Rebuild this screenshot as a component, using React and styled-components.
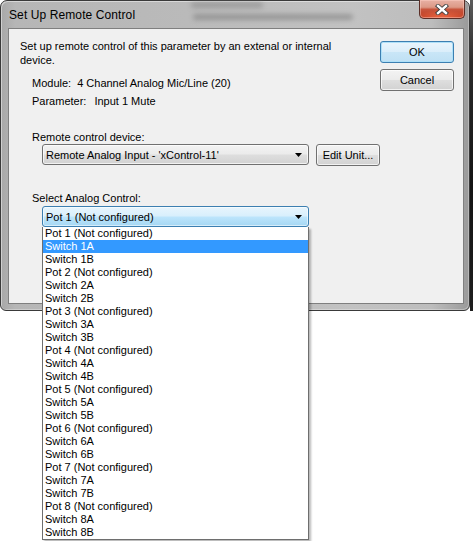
import React from 'react';
import styled, { createGlobalStyle, css } from 'styled-components';

const GlobalStyle = createGlobalStyle`
  html, body {
    margin: 0;
    padding: 0;
    background: #ffffff;
  }
  body {
    font-family: "Liberation Sans", Arial, sans-serif;
    font-size: 11px;
    color: #000;
  }
`;

const Scene = styled.div`
  position: relative;
  width: 473px;
  height: 541px;
  overflow: hidden;
  background: #ffffff;
`;

const Desk = styled.div`
  display: flex;
  height: 311px;
`;

const DesktopEdge = styled.div`
  flex: 1;
  background: linear-gradient(#5c5c5c, #2a2a2a 20%, #141414 60%, #1e1e1e);
`;

const Window = styled.div`
  position: relative;
  width: 470px;
  flex: none;
  box-sizing: border-box;
  display: flex;
  flex-direction: column;
  border: 1px solid #3a3a3a;
  border-radius: 7px 7px 6px 6px;
  background: linear-gradient(
    to right,
    #a8a8a8 0%,
    #b6b6b6 3%,
    #bababa 40%,
    #c2c2c2 75%,
    #bdbdbd 92%,
    #9a9a9a 100%
  );
  box-shadow: inset 1px 1px 0 rgba(255, 255, 255, 0.45), inset -1px -1px 0 rgba(255, 255, 255, 0.3);
`;

const TitleBar = styled.div`
  position: relative;
  height: 27px;
  display: flex;
  align-items: center;
  padding-left: 8px;
`;

const Haze = styled.span`
  position: absolute;
  left: ${(p) => p.$left}px;
  top: ${(p) => p.$top}px;
  width: ${(p) => p.$width}px;
  height: ${(p) => p.$height}px;
  background: #7e7e7e;
  opacity: ${(p) => p.$opacity};
  filter: blur(2.5px);
  border-radius: 3px;
`;

const Title = styled.span`
  position: relative;
  font-family: "Liberation Sans", Arial, sans-serif;
  font-size: 12px;
  color: #000;
  letter-spacing: 0.1px;
`;

const CloseButton = styled.div`
  position: relative;
  align-self: flex-start;
  margin: -1px 4px 0 auto;
  width: 46px;
  height: 19px;
  box-sizing: border-box;
  border: 1px solid #5b2e27;
  border-top: none;
  border-radius: 0 0 5px 5px;
  background:
    radial-gradient(ellipse 60% 45% at 50% 100%, rgba(255, 120, 80, 0.75), rgba(255, 120, 80, 0) 100%),
    linear-gradient(#e8b1a4 0%, #dc9986 40%, #c8553c 52%, #bd3a1f 100%);
  box-shadow: inset 0 0 0 1px rgba(255, 210, 200, 0.45);
  display: flex;
  align-items: center;
  justify-content: center;
`;

const Client = styled.div`
  flex: 1;
  margin: 0 5px 6px 7px;
  border: 1px solid #7f7f7f;
  background: #f0f0f0;
  display: flex;
  padding: 10px 0 0 11px;
`;

const Main = styled.div`
  flex: 1;
  display: flex;
  flex-direction: column;
`;

const Actions = styled.div`
  width: 74px;
  margin: 2px 11px 0 0;
  display: flex;
  flex-direction: column;
  gap: 6px;
`;

const Description = styled.p`
  margin: 0;
  line-height: 14px;
`;

const Info = styled.div`
  margin: 7px 0 0 12px;
  display: flex;
  flex-direction: column;
`;

const InfoRow = styled.div`
  height: 18px;
  display: flex;
  align-items: center;
`;

const InfoLabel = styled.span`
  margin-right: ${(p) => p.$gap}px;
`;

const FieldLabel = styled.div`
  margin: ${(p) => p.$top}px 0 0 12px;
  line-height: 14px;
`;

const ComboRow = styled.div`
  display: flex;
  align-items: flex-start;
  gap: 7px;
  margin-left: 22px;
`;

const gloss = css`
  border: 1px solid #707070;
  border-radius: 3px;
  background: linear-gradient(#f3f3f3 0%, #ebebeb 48%, #dedede 52%, #d2d2d2 100%);
  box-shadow: inset 0 0 0 1px rgba(255, 255, 255, 0.7);
`;

const focusGloss = css`
  border: 1px solid #3c7fb1;
  border-radius: 3px;
  background: linear-gradient(#e8f5fd 0%, #d8effc 48%, #bde5fc 52%, #a5d7f3 100%);
  box-shadow: inset 0 0 0 1px rgba(255, 255, 255, 0.55);
`;

const ComboShell = styled.div`
  position: relative;
  width: 267px;
  margin-top: ${(p) => p.$top || 0}px;
  margin-left: ${(p) => p.$left || 0}px;
`;

const Combo = styled.div`
  box-sizing: border-box;
  height: 21px;
  display: flex;
  align-items: center;
  padding: 0 6px 0 3px;
  ${(p) => (p.$focused ? focusGloss : gloss)}
`;

const ComboText = styled.span`
  flex: 1;
  white-space: nowrap;
`;

const Arrow = () => (
  <svg width="7" height="4" viewBox="0 0 7 4">
    <polygon points="0,0 7,0 3.5,4" fill="#000" />
  </svg>
);

const Button = styled.div`
  box-sizing: border-box;
  width: ${(p) => p.$width}px;
  height: 22px;
  display: flex;
  align-items: center;
  justify-content: center;
  white-space: nowrap;
  ${(p) =>
    p.$default
      ? css`
          border: 1px solid #3c7fb1;
          border-radius: 3px;
          background: linear-gradient(#eaf5fc 0%, #dbeefa 48%, #c9e6f7 52%, #bfe0f4 100%);
          box-shadow: inset 0 0 0 1px #aee0f8;
        `
      : gloss}
`;

const DropList = styled.ul`
  position: absolute;
  top: 100%;
  left: 0;
  width: 100%;
  box-sizing: border-box;
  margin: 0;
  padding: 0;
  list-style: none;
  background: #ffffff;
  border: 1px solid #6e6e6e;
  border-top: none;
  box-shadow: 2px 2px 2px rgba(0, 0, 0, 0.28);
  z-index: 5;
`;

const Option = styled.li`
  height: 13px;
  line-height: 13px;
  padding-left: 2px;
  white-space: nowrap;
  background: ${(p) => (p.$selected ? '#3399ff' : 'transparent')};
  color: ${(p) => (p.$selected ? '#ffffff' : '#000000')};
`;

const options = Array.from({ length: 8 }, (_, i) => [
  `Pot ${i + 1} (Not configured)`,
  `Switch ${i + 1}A`,
  `Switch ${i + 1}B`,
]).flat();

export default function App() {
  return (
    <Scene>
      <GlobalStyle />
      <Desk>
        <Window>
          <TitleBar>
            <Haze $left={190} $top={1} $width={72} $height={6} $opacity={0.5} />
            <Haze $left={192} $top={13} $width={160} $height={6} $opacity={0.6} />
            <Title>Set Up Remote Control</Title>
            <CloseButton>
              <svg width="14" height="11" viewBox="0 0 14 11">
                <path d="M3 2 L11 9 M11 2 L3 9" stroke="#3d3d3d" strokeWidth="4.2" strokeLinecap="square" />
                <path d="M3 2 L11 9 M11 2 L3 9" stroke="#ffffff" strokeWidth="2.4" strokeLinecap="square" />
              </svg>
            </CloseButton>
          </TitleBar>
          <Client>
            <Main>
              <Description>
                Set up remote control of this parameter by an extenal or internal
                <br />
                device.
              </Description>
              <Info>
                <InfoRow>
                  <InfoLabel $gap={6}>Module:</InfoLabel>
                  <span>4 Channel Analog Mic/Line (20)</span>
                </InfoRow>
                <InfoRow>
                  <InfoLabel $gap={8}>Parameter:</InfoLabel>
                  <span>Input 1 Mute</span>
                </InfoRow>
              </Info>
              <FieldLabel $top={20}>Remote control device:</FieldLabel>
              <ComboRow>
                <ComboShell>
                  <Combo>
                    <ComboText>Remote Analog Input - 'xControl-11'</ComboText>
                    <Arrow />
                  </Combo>
                </ComboShell>
                <Button $width={64}>Edit Unit...</Button>
              </ComboRow>
              <FieldLabel $top={25}>Select Analog Control:</FieldLabel>
              <ComboShell $top={1} $left={22}>
                <Combo $focused>
                  <ComboText>Pot 1 (Not configured)</ComboText>
                  <Arrow />
                </Combo>
                <DropList>
                  {options.map((label) => (
                    <Option key={label} $selected={label === 'Switch 1A'}>
                      {label}
                    </Option>
                  ))}
                </DropList>
              </ComboShell>
            </Main>
            <Actions>
              <Button $width={74} $default>
                OK
              </Button>
              <Button $width={74}>Cancel</Button>
            </Actions>
          </Client>
        </Window>
        <DesktopEdge />
      </Desk>
    </Scene>
  );
}
